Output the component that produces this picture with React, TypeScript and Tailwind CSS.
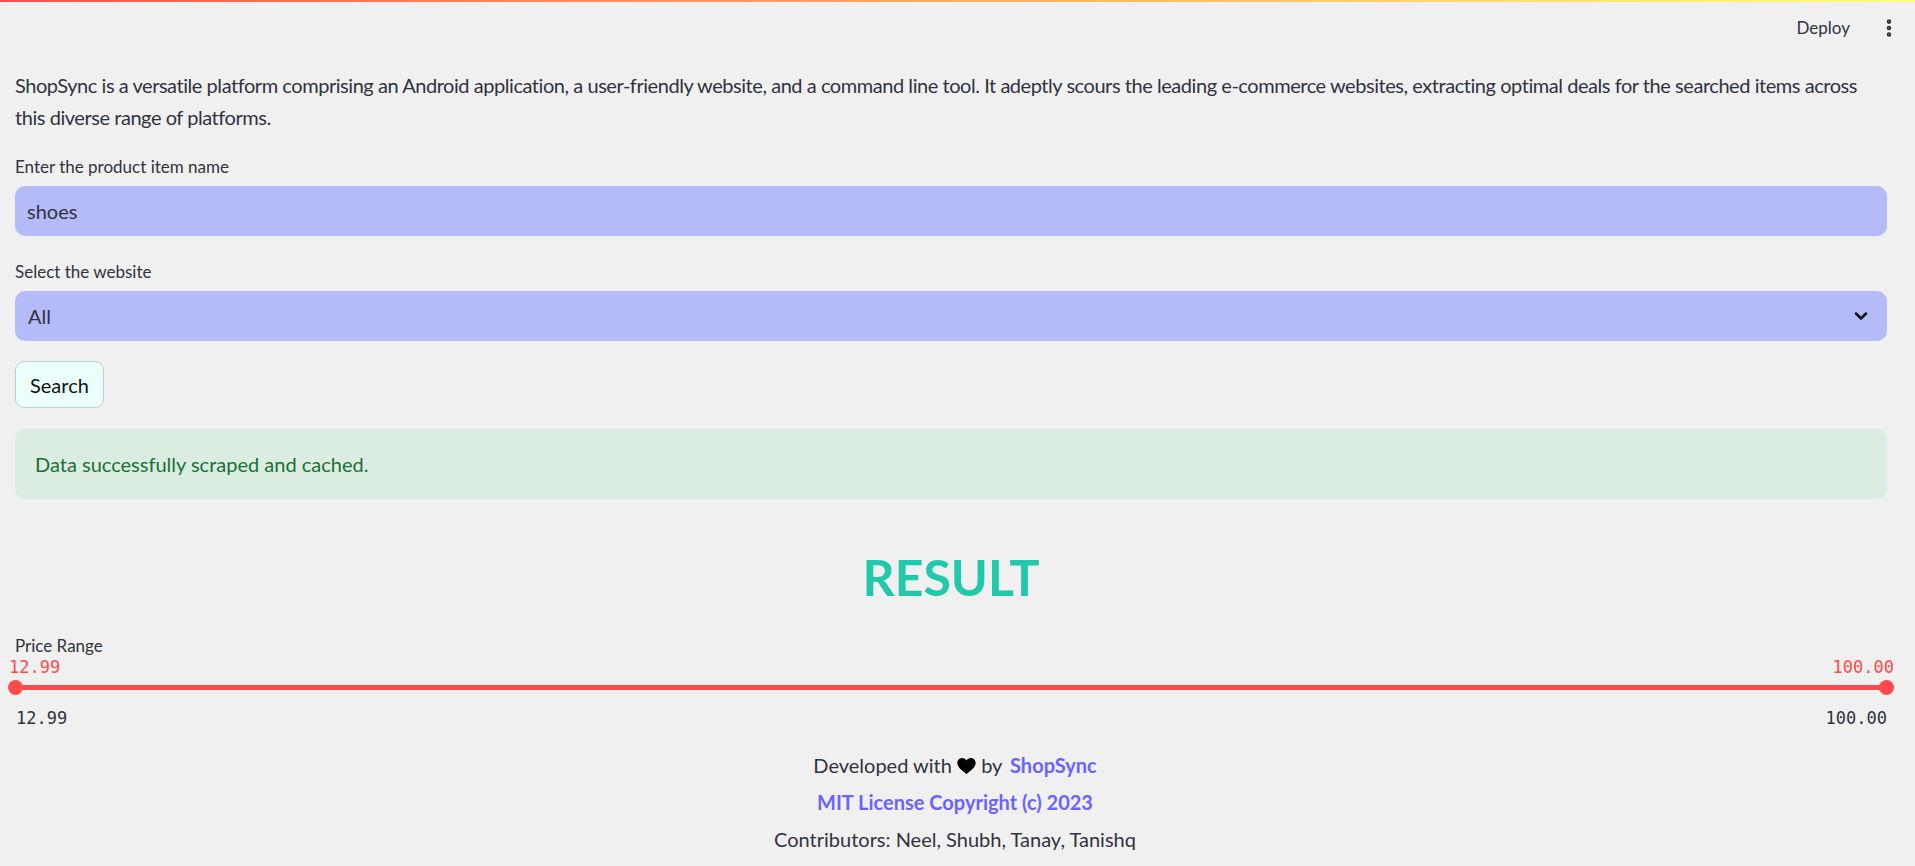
import { ChevronDown, EllipsisVertical } from "lucide-react";

const sans = "font-['Lato','Noto_Sans',sans-serif]";
const mono = "font-['DejaVu_Sans_Mono','Liberation_Mono',monospace]";

function Field({ label, children }: { label: string; children: React.ReactNode }) {
  return (
    <div className="flex flex-col">
      <label className="mb-[8px] text-[17px] leading-[22px] text-[#31333f]">{label}</label>
      {children}
    </div>
  );
}

function Heart() {
  return (
    <svg viewBox="0 0 24 21" className="inline-block h-[16px] w-[19px] align-[-1px]" fill="#000">
      <path d="M12 21 C5 15.5 0 11.5 0 6.5 C0 2.8 2.8 0 6.3 0 C8.7 0 10.8 1.3 12 3.3 C13.2 1.3 15.3 0 17.7 0 C21.2 0 24 2.8 24 6.5 C24 11.5 19 15.5 12 21 Z" />
    </svg>
  );
}

function PriceSlider({ min, max }: { min: string; max: string }) {
  return (
    <div className="mt-[28px] flex flex-col">
      <span className="text-[17px] leading-[22px] text-[#31333f]">Price Range</span>
      <div className="-mx-[7px] flex flex-col">
        <div className={`flex justify-between pl-[1px] text-[17px] leading-[20px] text-[#ff4b4b] ${mono}`}>
          <span>{min}</span>
          <span>{max}</span>
        </div>
        <div className="mt-[3px] flex h-[15px] items-center">
          <span className="h-[15px] w-[15px] shrink-0 rounded-full bg-[#ff4b4b]" />
          <span className="-mx-[2px] h-[5px] flex-1 bg-[#ff4b4b]" />
          <span className="h-[15px] w-[15px] shrink-0 rounded-full bg-[#ff4b4b]" />
        </div>
      </div>
      <div className={`mt-[13px] flex justify-between pl-[1px] text-[17px] leading-[20px] text-[#31333f] ${mono}`}>
        <span>{min}</span>
        <span>{max}</span>
      </div>
    </div>
  );
}

export default function App() {
  return (
    <div className={`min-h-screen bg-[#f0f0f0] text-[#31333f] ${sans}`}>
      <div className="h-[2px] bg-gradient-to-r from-[#ff4b4b] to-[#fffd80]" />
      <header className="flex h-[52px] items-center justify-end gap-[28px] pr-[15px]">
        <span className="text-[17px]">Deploy</span>
        <EllipsisVertical className="h-[22px] w-[22px] text-[#31333f]" strokeWidth={3} />
      </header>

      <main className="flex flex-col pl-[15px] pr-[28px]">
        <p className="mt-[15px] text-[20px] leading-[32px] tracking-[-0.45px]">
          ShopSync is a versatile platform comprising an Android application, a user-friendly website, and a
          command line tool. It adeptly scours the leading e-commerce websites, extracting optimal deals for the
          searched items across this diverse range of platforms.
        </p>

        <div className="mt-[23px]">
          <Field label="Enter the product item name">
            <div className="flex h-[50px] items-center rounded-[10px] bg-[#b4bbf8] px-[12px] text-[20px]">shoes</div>
          </Field>
        </div>

        <div className="mt-[25px]">
          <Field label="Select the website">
            <div className="flex h-[50px] items-center justify-between rounded-[10px] bg-[#b4bbf8] pl-[13px] pr-[16px] text-[20px]">
              <span>All</span>
              <ChevronDown className="h-[20px] w-[20px] text-[#111]" strokeWidth={3} />
            </div>
          </Field>
        </div>

        <div className="mt-[20px]">
          <button
            type="button"
            className="h-[47px] rounded-[9px] border border-[#bcd0d0] bg-[#ebfffd] px-[14px] text-[20px] text-[#111]"
          >
            Search
          </button>
        </div>

        <div className="mt-[21px] flex h-[70px] items-center rounded-[10px] bg-[#dbece0] px-[20px] text-[20px] text-[#177233]">
          Data successfully scraped and cached.
        </div>

        <h1 className="mt-[48px] text-center text-[50px] font-bold leading-[60px] text-[#20c9a9]">RESULT</h1>

        <PriceSlider min="12.99" max="100.00" />

        <footer className="mt-[25px] flex flex-col items-center gap-[13px] pb-[12px] pl-[8px] text-[20px] leading-[24px]">
          <p>
            Developed with <Heart /> by <span className="ml-[3px] font-bold text-[#6c63ff]">ShopSync</span>
          </p>
          <p className="font-bold text-[#6c63ff]">MIT License Copyright (c) 2023</p>
          <p>Contributors: Neel, Shubh, Tanay, Tanishq</p>
        </footer>
      </main>
    </div>
  );
}
